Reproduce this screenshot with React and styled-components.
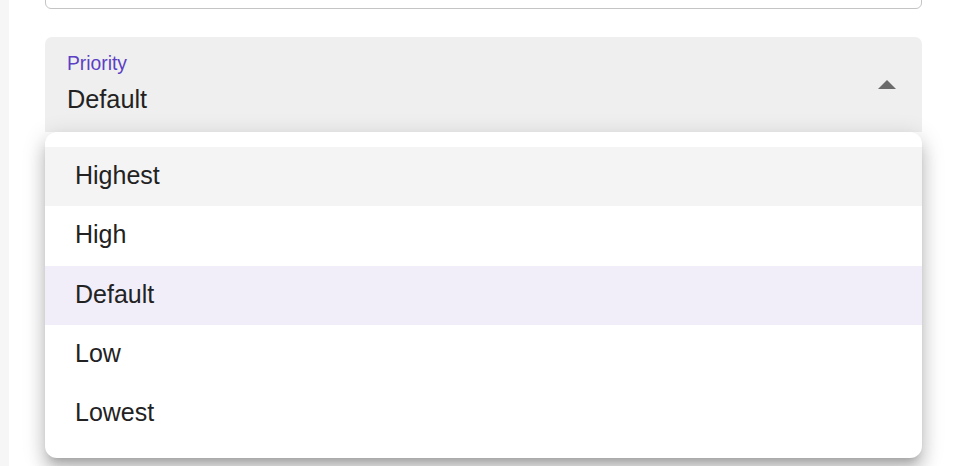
import React from 'react';
import styled, { createGlobalStyle } from 'styled-components';

const GlobalStyle = createGlobalStyle`
    html, body {
        margin: 0;
        padding: 0;
        background: #ffffff;
        font-family: "Liberation Sans", Arial, Helvetica, sans-serif;
        overflow: hidden;
    }
`

const Page = styled.div`
    display: flex;
    height: 466px;
    overflow: hidden;
`

const SideEdge = styled.div`
    width: 9px;
    flex-shrink: 0;
    background: #f6f6f6;
`

const Content = styled.div`
    flex: 1;
    display: flex;
    flex-direction: column;
    gap: 28px;
    padding: 0 46px 0 36px;
`

const OutlinedField = styled.div`
    height: 90px;
    margin-top: -81px;
    border: 1px solid #c4c4c4;
    border-radius: 6px;
    box-sizing: border-box;
`

const SelectWrap = styled.div`
    position: relative;
`

const FilledSelect = styled.div`
    height: 95px;
    display: flex;
    align-items: center;
    justify-content: space-between;
    padding: 0 26px 0 22px;
    background: #efefef;
    border-radius: 7px 7px 0 0;
    box-sizing: border-box;
`

const FieldText = styled.div`
    display: flex;
    flex-direction: column;
    align-self: flex-start;
    padding-top: 14.8px;
`

const Label = styled.span`
    font-size: 19.3px;
    line-height: 23px;
    color: #5b3fc4;
`

const Value = styled.span`
    margin-top: 9.7px;
    font-size: 25.3px;
    line-height: 30px;
    color: #222222;
`

const Menu = styled.ul`
    position: absolute;
    top: 95px;
    left: 0;
    right: 0;
    margin: 0;
    padding: 15px 0;
    list-style: none;
    background: #ffffff;
    border-radius: 12px;
    box-shadow: 0px 8px 8px -5px rgba(0, 0, 0, 0.2),
        0px 13px 16px 2px rgba(0, 0, 0, 0.14),
        0px 5px 22px 3px rgba(0, 0, 0, 0.12);
`

const MenuItem = styled.li`
    height: 59.3px;
    display: flex;
    align-items: center;
    padding: 0 0 2px 30px;
    box-sizing: border-box;
    font-size: 25px;
    color: #222222;
    background: ${p => (p.$selected ? '#f1eefa' : p.$hover ? '#f4f4f4' : 'transparent')};
`

const ArrowUp = () => (
    <svg width="18" height="9" viewBox="0 0 18 9">
        <path d="M0 9 L9 0 L18 9 Z" fill="#6b6b6b" />
    </svg>
)

const options = ['Highest', 'High', 'Default', 'Low', 'Lowest'];

const App = () => {
    return (
    <>
    <GlobalStyle />
    <Page>
        <SideEdge />
        <Content>
            <OutlinedField />
            <SelectWrap>
                <FilledSelect>
                    <FieldText>
                        <Label>Priority</Label>
                        <Value>Default</Value>
                    </FieldText>
                    <ArrowUp />
                </FilledSelect>
                <Menu>
                    {options.map((o, i) => (
                        <MenuItem key={o} $hover={i === 0} $selected={o === 'Default'}>{o}</MenuItem>
                    ))}
                </Menu>
            </SelectWrap>
        </Content>
    </Page>
    </>
    )
}

export default App
